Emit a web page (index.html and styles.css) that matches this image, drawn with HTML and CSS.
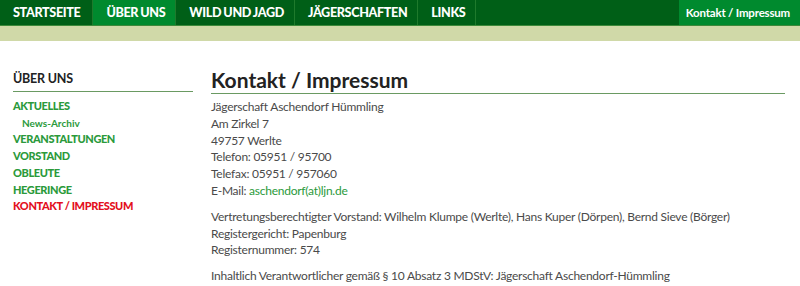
FILE: index.html
```html
<!DOCTYPE html>
<html lang="de">
<head>
    <meta charset="UTF-8">
    <meta name="viewport" content="width=device-width, initial-scale=1.0">
    <title>Kontakt / Impressum</title>
    <link rel="stylesheet" href="styles.css">
</head>
<body>
    <header class="topbar">
        <nav class="mainnav">
            <a href="#">Startseite</a>
            <a href="#" class="active">Über uns</a>
            <a href="#">Wild und Jagd</a>
            <a href="#">Jägerschaften</a>
            <a href="#">Links</a>
        </nav>
        <a href="#" class="contact-tab">Kontakt / Impressum</a>
    </header>
    <div class="subbar"></div>

    <div class="page">
        <aside class="sidebar">
            <h3>Über uns</h3>
            <ul class="subnav">
                <li><a href="#">Aktuelles</a></li>
                <li class="sub"><a href="#">News-Archiv</a></li>
                <li><a href="#">Veranstaltungen</a></li>
                <li><a href="#">Vorstand</a></li>
                <li><a href="#">Obleute</a></li>
                <li><a href="#">Hegeringe</a></li>
                <li><a href="#" class="current">Kontakt / Impressum</a></li>
            </ul>
        </aside>

        <main class="content">
            <h1>Kontakt / Impressum</h1>
            <p>
                Jägerschaft Aschendorf Hümmling<br>
                Am Zirkel 7<br>
                49757 Werlte<br>
                Telefon: 05951 / 95700<br>
                Telefax: 05951 / 957060<br>
                E-Mail: <a href="#">aschendorf(at)ljn.de</a>
            </p>
            <p>
                Vertretungsberechtigter Vorstand: Wilhelm Klumpe (Werlte), Hans Kuper (Dörpen), Bernd Sieve (Börger)<br>
                Registergericht: Papenburg<br>
                Registernummer: 574
            </p>
            <p>Inhaltlich Verantwortlicher gemäß § 10 Absatz 3 MDStV: Jägerschaft Aschendorf-Hümmling</p>
        </main>
    </div>
</body>
</html>
```

FILE: styles.css
```css
/* General Styling */
body {
    margin: 0;
    font-family: Lato, Arial, sans-serif;
    color: #4a4a4a;
    background: #fff;
    overflow: hidden;
}
a {
    text-decoration: none;
}

/* Top Navigation */
.topbar {
    display: flex;
    justify-content: space-between;
    height: 25px;
    background: #005f17;
    border-bottom: 1px solid #3d8a3a;
}
.mainnav {
    display: flex;
}
.mainnav a {
    display: flex;
    align-items: center;
    padding: 0 10px 0 13px;
    border-right: 1px solid #1f7a2c;
    color: #fff;
    font-weight: 900;
    font-size: 12.6px;
    letter-spacing: -0.35px;
    word-spacing: -0.5px;
    text-transform: uppercase;
}
.mainnav a:first-child {
    padding-right: 12px;
}
.mainnav a.active {
    background: #008a2e;
}
.contact-tab {
    display: flex;
    align-items: center;
    padding: 0 10px 0 7px;
    background: #008a2e;
    color: #fff;
    font-weight: bold;
    font-size: 11.5px;
    letter-spacing: -0.2px;
}
.subbar {
    height: 15px;
    background: #d0d9a8;
}

/* Layout */
.page {
    display: flex;
    gap: 18px;
    padding: 26px 15px 0 13px;
}

/* Sidebar */
.sidebar {
    width: 180px;
    flex-shrink: 0;
}
.sidebar h3 {
    margin: 0 0 6px;
    padding: 4px 0 5px;
    border-bottom: 1px solid #6a9a62;
    font-size: 12.5px;
    letter-spacing: -0.2px;
    color: #222;
    text-transform: uppercase;
}
.subnav {
    list-style: none;
    margin: 0;
    padding: 0;
}
.subnav li {
    font-size: 11px;
    line-height: 16.8px;
}
.subnav a {
    color: #2b9a3b;
    font-weight: 900;
    letter-spacing: -0.4px;
    text-transform: uppercase;
}
.subnav li.sub {
    padding-left: 9px;
    font-size: 10px;
    line-height: 16.5px;
}
.subnav li.sub a {
    font-weight: bold;
    letter-spacing: 0;
    text-transform: none;
}
.subnav a.current {
    color: #e3101d;
}

/* Content */
.content {
    flex: 1;
}
.content h1 {
    margin: 0 0 5px;
    border-bottom: 1px solid #6a9a62;
    font-size: 21px;
    line-height: 26px;
    color: #222;
}
.content p {
    margin: 0 0 9px;
    font-size: 12px;
    letter-spacing: -0.25px;
    line-height: 16.8px;
}
.content p a {
    color: #2b9a3b;
}
```
